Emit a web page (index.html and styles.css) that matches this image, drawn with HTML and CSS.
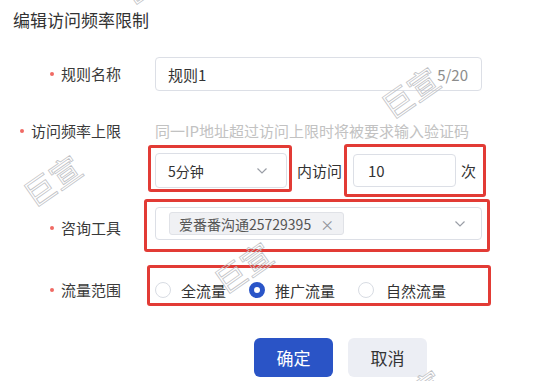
FILE: index.html
```html
<!DOCTYPE html>
<html lang="zh-CN">
<head>
<meta charset="utf-8">
<title>编辑访问频率限制</title>
<link rel="stylesheet" href="styles.css">
</head>
<body>
<div class="page">
  <div class="title">编辑访问频率限制</div>
  <div class="form">
    <div class="row r1">
      <div class="lbl req">规则名称</div>
      <div class="ctl">
        <div class="input wide"><span class="val">规则1</span><span class="count">5/20</span></div>
      </div>
    </div>
    <div class="row r2">
      <div class="lbl req">访问频率上限</div>
      <div class="ctl"><span class="hint">同一IP地址超过访问上限时将被要求输入验证码</span></div>
    </div>
    <div class="row r3">
      <div class="lbl"></div>
      <div class="ctl freq">
        <div class="hl hl1">
          <div class="select period"><span class="val sm">5分钟</span>
            <svg class="chev" width="10" height="6" viewBox="0 0 10 6"><polyline points="0.5,0.5 5,5 9.5,0.5" fill="none" stroke="#9a9ea6" stroke-width="1.2"/></svg>
          </div>
        </div>
        <span class="mid">内访问</span>
        <div class="hl hl2">
          <div class="input count-in"><span class="val">10</span></div>
          <span class="unit">次</span>
        </div>
      </div>
    </div>
    <div class="row r4">
      <div class="lbl req">咨询工具</div>
      <div class="ctl">
        <div class="hl hl3">
          <div class="select multi">
            <span class="tag">爱番番沟通25729395<span class="x">×</span></span>
            <svg class="chev" width="10" height="6" viewBox="0 0 10 6"><polyline points="0.5,0.5 5,5 9.5,0.5" fill="none" stroke="#9a9ea6" stroke-width="1.2"/></svg>
          </div>
        </div>
      </div>
    </div>
    <div class="row r5">
      <div class="lbl req">流量范围</div>
      <div class="ctl">
        <div class="hl hl4">
          <label class="radio"><span class="dot"></span><span>全流量</span></label>
          <label class="radio on"><span class="dot"></span><span>推广流量</span></label>
          <label class="radio"><span class="dot"></span><span>自然流量</span></label>
        </div>
      </div>
    </div>
    <div class="actions">
      <button class="btn primary">确定</button>
      <button class="btn ghost">取消</button>
    </div>
  </div>
  <div class="marks">
    <span class="wm w0">巨宣</span>
    <span class="wm w1">巨宣</span>
    <span class="wm w2">巨宣</span>
    <span class="wm w3">巨宣</span>
    <span class="wm w4">巨宣</span>
  </div>
</div>
</body>
</html>
```
FILE: styles.css
```css
* { box-sizing: border-box; }
html, body { margin: 0; padding: 0; background: #fff; }
body {
  font-family: "Noto Sans CJK SC", "Noto Sans", sans-serif;
  color: #333;
}
.page {
  position: relative;
  width: 538px;
  height: 381px;
  overflow: hidden;
}
.title {
  margin: 8px 0 0 13px;
  font-size: 17px;
  line-height: 24px;
  color: #333;
}
.form { display: flex; flex-direction: column; }
.row { display: flex; align-items: flex-start; }
.lbl {
  width: 121px;
  flex-shrink: 0;
  text-align: right;
  font-size: 15px;
  line-height: 20px;
  color: #3a3a3a;
  white-space: nowrap;
}
.lbl.req::before {
  content: "";
  display: inline-block;
  width: 4px;
  height: 4px;
  border-radius: 50%;
  background: #f06a64;
  margin-right: 7px;
  vertical-align: 4px;
}
.ctl { margin-left: 34px; display: flex; align-items: flex-start; }

.r1 { margin-top: 25px; }
.r1 .lbl { margin-top: 7px; }
.r2 { margin-top: 30px; }
.r3 { margin-top: 3px; }
.r4 { margin-top: 2px; }
.r4 .lbl { margin-top: 19px; }
.r5 { margin-top: 13px; }
.r5 .lbl { margin-top: 15px; }

.input, .select {
  display: flex;
  align-items: center;
  justify-content: space-between;
  border: 1px solid #dcdfe6;
  border-radius: 4px;
  background: #fff;
}
.input.wide { width: 327px; height: 34px; padding: 0 13px 0 12px; }
.val { font-size: 15px; color: #333; }
.val.sm { font-size: 14px; }
.count { font-size: 15px; color: #8c8c8c; }
.hint { font-size: 15px; line-height: 20px; color: #c2c2c2; white-space: nowrap; }

.hl {
  border: 3px solid #e23b35;
  border-radius: 3px;
}
.hl1 { margin: 1px 0 0 -7px; padding: 5px 2px 1px 4px; }
.select.period { width: 132px; height: 35px; padding: 0 19px 0 12px; }
.mid { margin-left: 5px; font-size: 15px; line-height: 20px; color: #333; align-self: center; }
.hl2 { margin-left: 2px; padding: 7px 7px 7px 6px; display: flex; align-items: center; gap: 5px; }
.input.count-in { width: 103px; height: 33px; padding: 0 14px; }
.unit { font-size: 15px; color: #333; }

.hl3 { margin-left: -11px; padding: 5px 5px 9px 8px; }
.select.multi { width: 327px; height: 33px; padding: 0 16px 0 13px; }
.tag {
  display: inline-flex;
  align-items: center;
  height: 23px;
  padding: 0 9px;
  background: #f0f1f4;
  border: 1px solid #e0e2e7;
  border-radius: 3px;
  font-size: 14px;
  color: #555;
  white-space: nowrap;
}
.tag .x { margin-left: 9px; color: #8f939b; font-size: 14px; }

.hl4 {
  margin-left: -8px;
  width: 344px;
  padding: 11px 0 2px 5px;
  display: flex;
  align-items: center;
}
.radio {
  display: flex;
  align-items: center;
  height: 22px;
  gap: 10px;
  margin-right: 23px;
  font-size: 15px;
  color: #333;
}
.radio .dot {
  width: 16px;
  height: 16px;
  border-radius: 50%;
  border: 1px solid #d8dce3;
  background: #fff;
}
.radio.on .dot { border: 5px solid #2a55c8; }
.radio:last-child { gap: 12px; }

.actions {
  margin-top: 32px;
  padding-left: 254px;
  display: flex;
  gap: 15px;
}
.btn {
  width: 79px;
  height: 39px;
  border: none;
  border-radius: 6px;
  font-family: inherit;
  font-size: 17px;
  cursor: pointer;
}
.btn.primary { background: #2a54c6; color: #fff; }
.btn.ghost { background: #eceef4; color: #333; }

.marks { position: absolute; inset: 0; pointer-events: none; }
.wm {
  position: absolute;
  width: 64px;
  height: 32px;
  margin: -16px 0 0 -32px;
  font-size: 31px;
  line-height: 32px;
  text-align: center;
  color: transparent;
  -webkit-text-stroke: 0.8px #bfc2c6;
  transform: rotate(-35deg);
  white-space: nowrap;
}
.w0 { left: 150px; top: -22px; }
.w1 { left: 410px; top: 92px; }
.w2 { left: 52px; top: 180px; }
.w3 { left: 243px; top: 267px; }
.w4 { left: 414px; top: 395px; }
```
